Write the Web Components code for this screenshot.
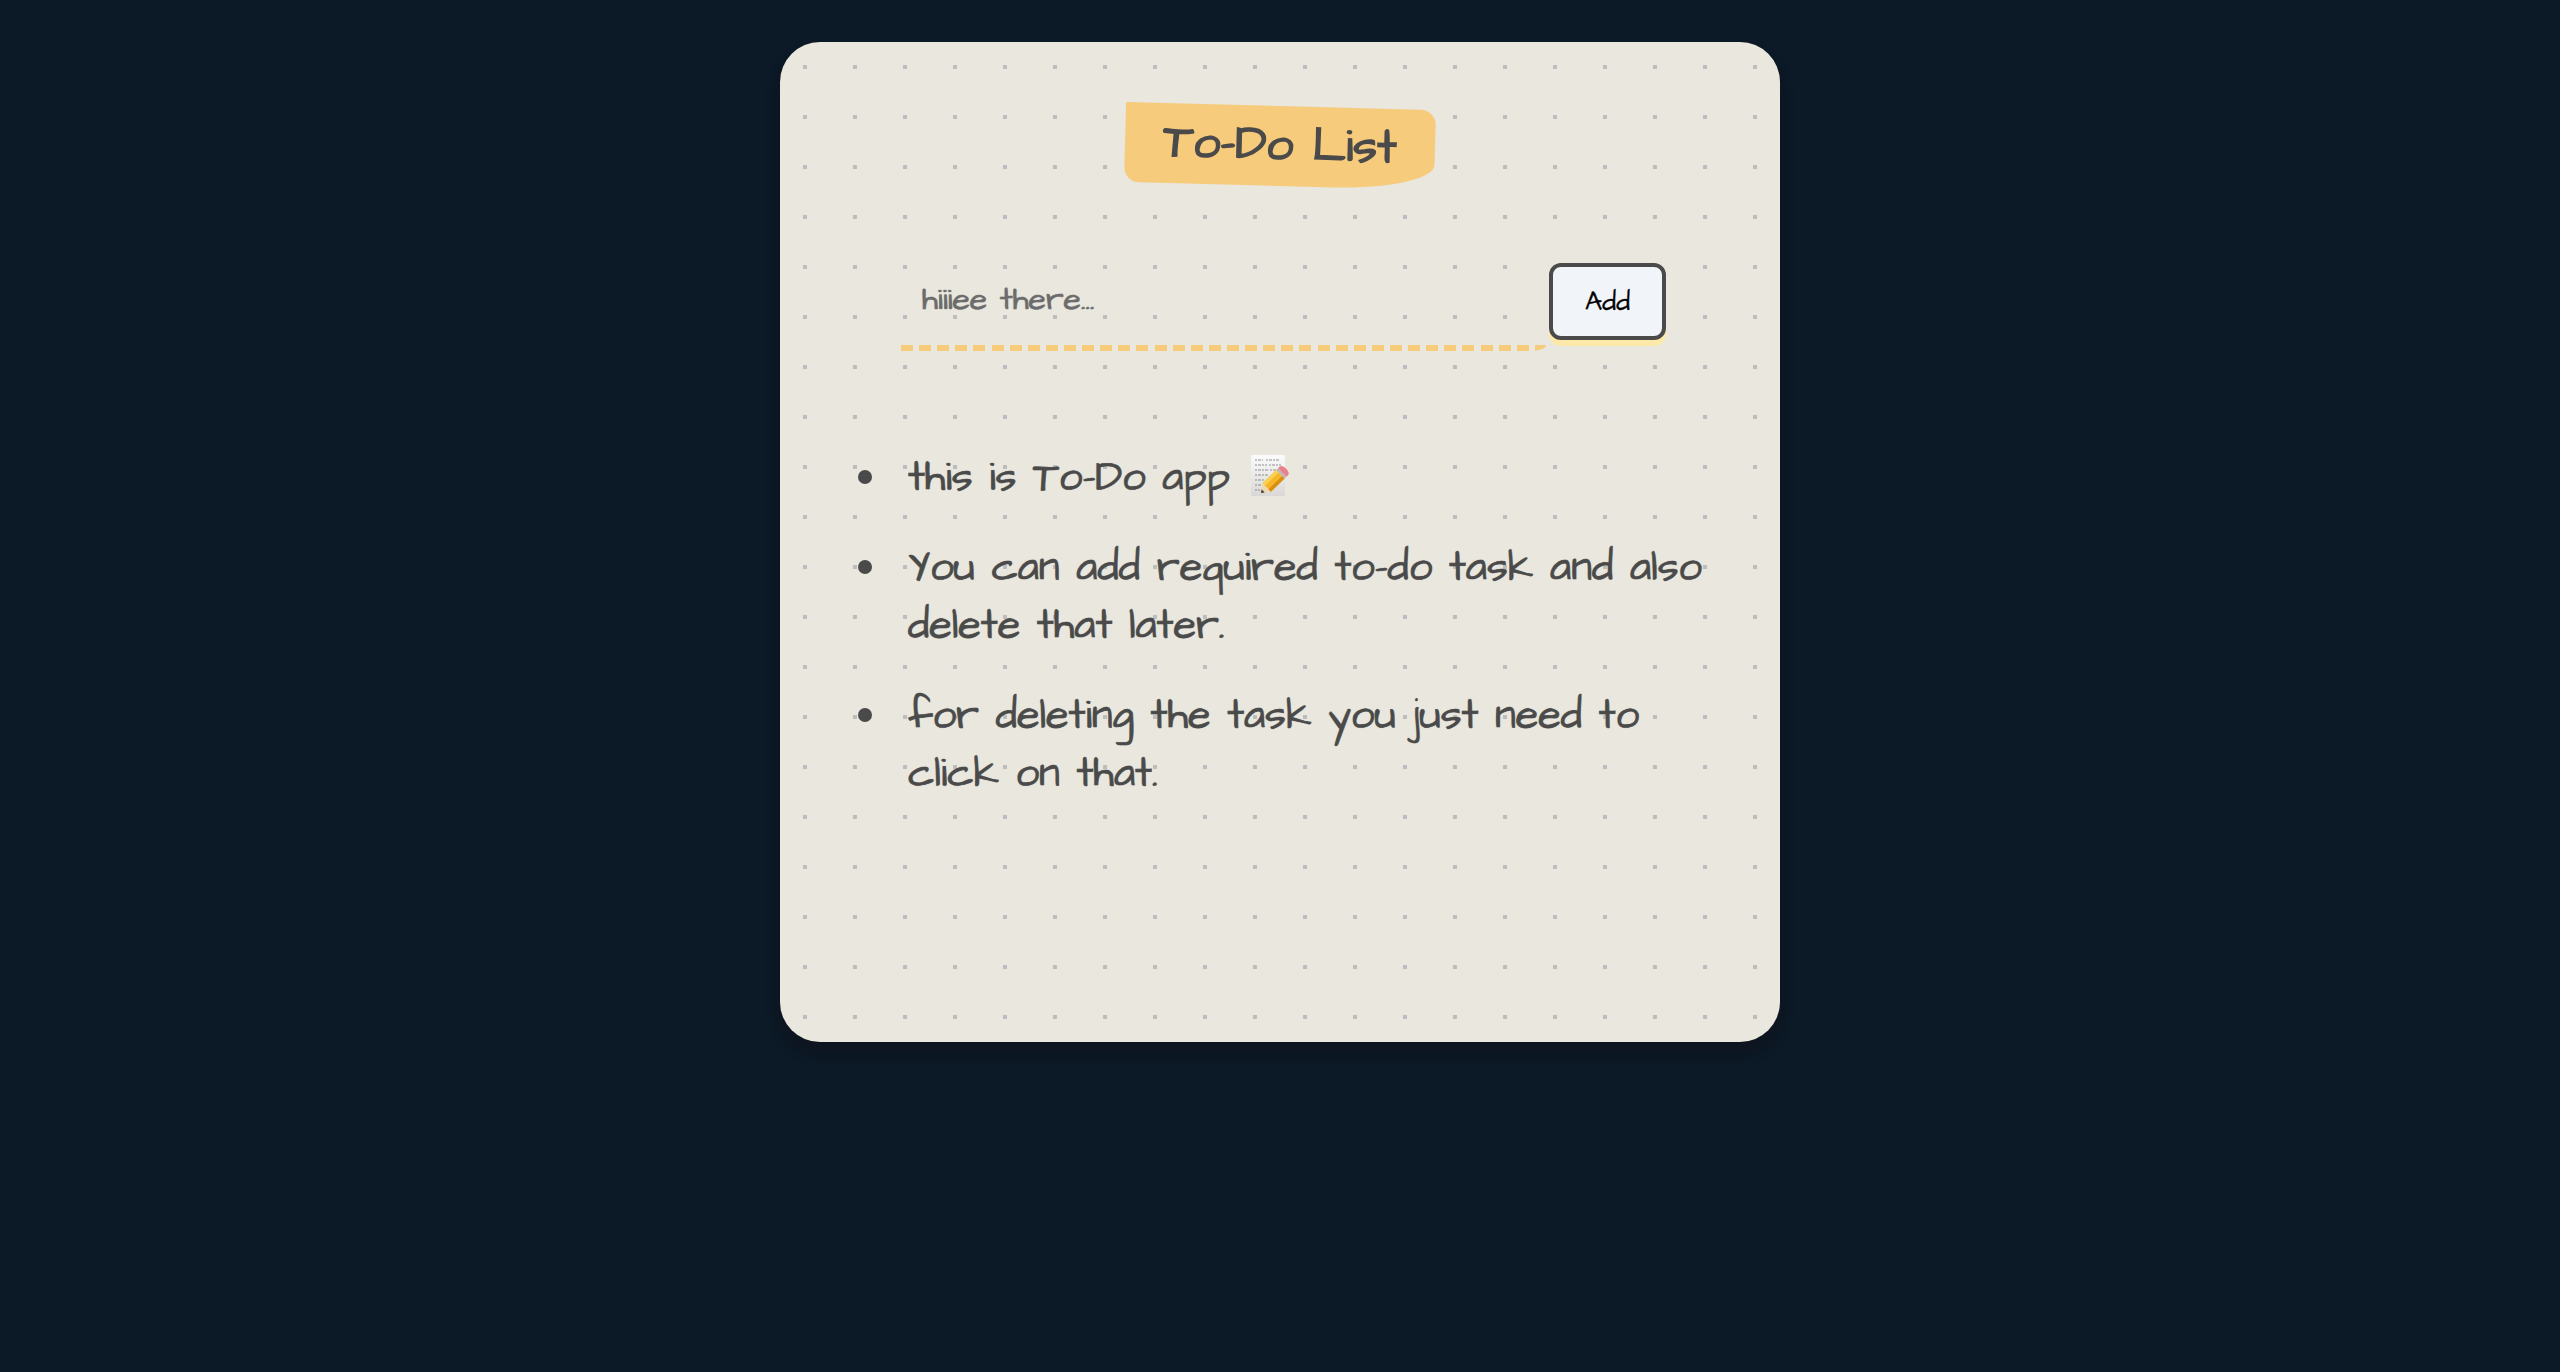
<!DOCTYPE html>
<html lang="en"><head><meta charset="utf-8"><title>To-Do List</title>
<style>
html,body{margin:0;height:100%;background:#0c1926}
body{min-height:1372px;overflow:hidden;font-family:"Architects Daughter","Patrick Hand","Comic Sans MS",Lato,sans-serif}
</style></head><body>
<todo-app>
  <sticky-title slot="title">To-Do List</sticky-title>
  <task-form slot="form" placeholder="hiiiee there...">Add</task-form>
  <task-list slot="list">
    <task-item>this is To-Do app <memo-emoji></memo-emoji></task-item>
    <task-item>You can add required to-do task and also delete that later.</task-item>
    <task-item>for deleting the task you just need to click on that.</task-item>
  </task-list>
</todo-app>
<script>
function def(name,html){customElements.define(name,class extends HTMLElement{constructor(){super();this.attachShadow({mode:"open"}).innerHTML=html(this)}})}
const dots="data:image/svg+xml,%3Csvg xmlns='http://www.w3.org/2000/svg' width='50' height='50'%3E%3Crect x='23' y='23' width='4' height='4' fill='%23bdbdbd'/%3E%3C/svg%3E";
def("todo-app",()=>`<style>
:host{display:flex;flex-direction:column;box-sizing:border-box;width:1000px;height:1000px;margin:42px auto 0;border-radius:40px;
background-color:#e9e7de;background-image:url("${dots}");background-size:50px 50px;
box-shadow:0 10px 14px rgba(20,10,15,.3);color:#4a4a4a;padding:64px 0 0}
</style><slot name="title"></slot><slot name="form"></slot><slot name="list"></slot>`);
def("sticky-title",()=>`<style>
:host{display:block;align-self:center;box-sizing:border-box;width:310px;height:80px;background:#f6cc7c;transform:rotate(1.5deg);border-radius:0 15px 100px 15px / 0 15px 25px 15px;
font-size:48px;font-weight:700;line-height:78px;text-align:center;color:#4a4a4a}
</style><slot></slot>`);
def("task-form",h=>`<style>
:host{display:flex;align-items:stretch;margin:77px 0 0 121px;width:765px;height:88px}
.field{flex:1;box-sizing:border-box;margin-right:3px;background:repeating-linear-gradient(90deg,#f6cc7c 0 12px,transparent 12px 18.11px) left bottom/100% 6px no-repeat;border-radius:0 0 15px 0 / 0 0 6px 0;padding:2px 21px 0;font-size:32px;line-height:70px;color:#6c6c6c;-webkit-text-stroke:.5px #6c6c6c;text-shadow:0 0 1px rgba(108,108,108,.6)}
button{all:unset;box-sizing:border-box;width:117px;height:77px;border:4px solid #4a4a4a;border-radius:12px;background:#f1f4f8;box-shadow:0 6px 0 #fde9a9;color:#000;font:inherit;font-size:27px;text-align:center;line-height:62px;-webkit-text-stroke:.3px #000}
</style><div class="field" role="textbox">${h.getAttribute("placeholder")}</div><button><slot></slot></button>`);
def("task-list",()=>`<style>
:host{display:flex;flex-direction:column;gap:32px;margin:98px 0 0;padding:0 50px 0 128px}
</style><slot></slot>`);
def("task-item",()=>`<style>
:host{display:block;position:relative;font-size:41.6px;line-height:58px;color:#4a4a4a;-webkit-text-stroke:.6px #4a4a4a;text-shadow:0 0 1px rgba(74,74,74,.6)}
.dot{position:absolute;left:-50px;top:21px;width:14px;height:14px;border-radius:50%;background:#4a4a4a}
</style><span class="dot"></span><slot></slot>`);
def("memo-emoji",()=>`<style>
:host{display:inline-block;width:38px;height:41px;vertical-align:-6px;margin-left:5px}
svg{display:block}
</style><svg width="38" height="41" viewBox="0 0 38 41" role="img" aria-label="memo">
<defs><linearGradient id="p" x1="0" y1="0" x2="0" y2="1"><stop offset="0" stop-color="#fbfbfb"/><stop offset="1" stop-color="#d9d8d6"/></linearGradient></defs>
<rect x="0" y="0" width="34" height="41" rx="1" fill="url(#p)"/>
<g stroke="#444" stroke-width=".7" fill="none" stroke-dasharray="2 1 3 1" opacity=".8">
<path d="M4 5h8M15 5h14M4 10h12M18 10h12M4 15h13M19 15h7M4 20h14M4 25h9M4 30h7M4 35h5"/></g>
<g transform="translate(10 38) rotate(-44)">
<path d="M0 0L8 -6V6Z" fill="#eed9ae"/><path d="M0 0L3 -2.2V2.2Z" fill="#3a3a3a"/>
<rect x="8" y="-6" width="19" height="12" fill="#f5b62a"/><rect x="8" y="-6" width="19" height="3.5" fill="#f9d04f"/><rect x="8" y="2.5" width="19" height="3.5" fill="#d98f12"/>
<rect x="27" y="-6" width="2.5" height="12" fill="#b8b8b8"/>
<path d="M29.5 -6H32a3 6 0 0 1 0 12H29.5Z" fill="#e9808a"/></g></svg>`);
</script>
</body></html>
